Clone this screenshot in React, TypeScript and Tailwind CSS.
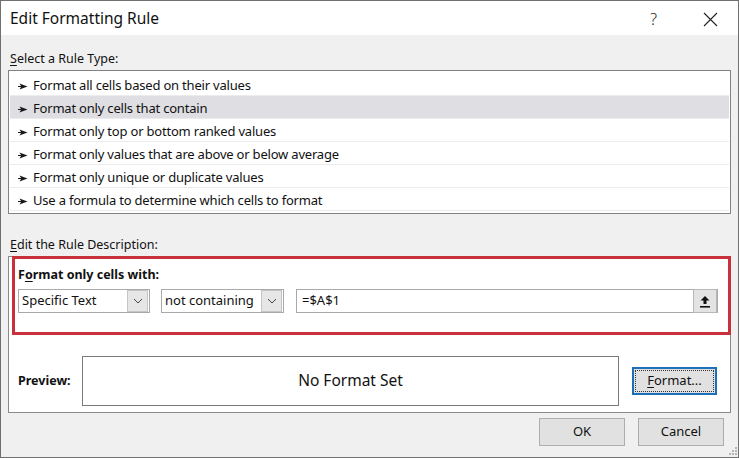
import React from 'react';

const font = { fontFamily: '"Segoe UI", "Noto Sans", "Open Sans", sans-serif' };

const rules = [
  'Format all cells based on their values',
  'Format only cells that contain',
  'Format only top or bottom ranked values',
  'Format only values that are above or below average',
  'Format only unique or duplicate values',
  'Use a formula to determine which cells to format',
];

function Chevron() {
  return (
    <svg width="10" height="6" viewBox="0 0 10 6">
      <polyline points="1,1 5,5 9,1" fill="none" stroke="#444" strokeWidth="1" />
    </svg>
  );
}

function Pointer() {
  return (
    <svg width="10" height="7" viewBox="0 0 10 7">
      <path d="M0 3 H3 L1.5 0.5 L9.5 3.5 L1.5 6.5 L3 4 H0 Z" fill="#1a1a1a" />
    </svg>
  );
}

function Select({ label, width }: { label: string; width: string }) {
  return (
    <div className={`flex h-[24px] items-center justify-between border border-[#a9a9a9] bg-white pl-[3px] pr-px ${width}`}>
      <span className="text-[13px] text-[#111]">{label}</span>
      <div className="flex h-[22px] w-[21px] items-center justify-center border border-[#c4c4c4] bg-[#e6e6e6]">
        <Chevron />
      </div>
    </div>
  );
}

function Button({ children }: { children: React.ReactNode }) {
  return (
    <div className="flex h-[28px] w-[86px] items-center justify-center border border-[#adadad] bg-[#e1e1e1] text-[13px] text-[#111]">
      {children}
    </div>
  );
}

export default function App() {
  return (
    <div style={font} className="flex h-[458px] w-[739px] flex-col border border-[#707070] bg-[#f0f0f0] text-[#111]">
      <div className="flex h-[37px] items-center justify-between bg-white pl-[9px] pr-[20px] pt-[2px]">
        <span className="text-[15.5px] text-[#111]">Edit Formatting Rule</span>
        <div className="flex items-center gap-[46px]">
          <span className="text-[16px] font-light text-[#222]">?</span>
          <svg width="15" height="15" viewBox="0 0 15 15">
            <path d="M1 1 L14 14 M14 1 L1 14" stroke="#222" strokeWidth="1.1" />
          </svg>
        </div>
      </div>

      <div className="flex flex-col px-[7px]">
        <div className="mt-[16px] h-[16px] pl-[2px] text-[12.5px] leading-[16px]">
          <span className="underline underline-offset-2">S</span>elect a Rule Type:
        </div>
        <div className="mt-[3px] flex h-[144px] flex-col border border-[#828282] bg-white px-px pt-[2px]">
          {rules.map((r, i) => (
            <div
              key={r}
              className={`flex h-[23px] shrink-0 items-center gap-[5px] border-b border-[#ececec] pl-[8px] pt-[4px] text-[13px] ${i === 1 ? 'bg-[#dfdfe3]' : ''}`}
            >
              <Pointer />
              <span className="tracking-[-0.2px]">{r}</span>
            </div>
          ))}
        </div>

        <div className="mt-[23px] h-[16px] pl-[2px] text-[12.5px] leading-[16px]">
          <span className="underline underline-offset-2">E</span>dit the Rule Description:
        </div>
        <div className="mt-[3px] flex h-[157px] flex-col border border-[#8a8a8a] bg-white">
          <div className="-mr-px -mt-px ml-[3px] flex h-[79px] flex-col border-[3px] border-[#c8303a] pl-[3px] pt-[8px]">
            <div className="h-[16px] text-[12.5px] font-bold leading-[16px]">
              F<span className="underline underline-offset-2">o</span>rmat only cells with:
            </div>
            <div className="mt-[6px] flex items-center">
              <Select label="Specific Text" width="w-[132px]" />
              <div className="w-[11px]" />
              <Select label="not containing" width="w-[123px]" />
              <div className="w-[12px]" />
              <div className="flex h-[24px] w-[422px] items-center justify-between border border-[#a9a9a9] bg-white pl-[5px]">
                <span className="text-[13px]">=$A$1</span>
                <div className="flex h-[24px] w-[24px] items-center justify-center border border-[#b8b8b8] bg-[#e3e3e3]">
                  <svg width="12" height="13" viewBox="0 0 12 13">
                    <path d="M6 1 L10.5 5.5 L7.5 5.5 L7.5 9 L4.5 9 L4.5 5.5 L1.5 5.5 Z" fill="#111" />
                    <rect x="1" y="11" width="10" height="1.6" fill="#111" />
                  </svg>
                </div>
              </div>
            </div>
          </div>
          <div className="mt-[21px] flex items-center pl-[9px]">
            <span className="w-[64px] text-[12.5px] font-bold">Preview:</span>
            <div className="flex h-[50px] w-[537px] items-center justify-center border border-[#7a7a7a] bg-white text-[15.5px]">
              No Format Set
            </div>
            <div className="ml-[13px] flex h-[28px] w-[85px] items-center justify-center border-2 border-[#1c6fb8] bg-[#e1e1e1] p-px">
              <div className="flex h-full w-full items-center justify-center border border-dotted border-[#333] text-[13px]">
                <span className="underline underline-offset-2">F</span>ormat...
              </div>
            </div>
          </div>
        </div>

        <div className="mt-[5px] flex items-center justify-end gap-[13px] pr-[7px]">
          <Button>OK</Button>
          <Button>Cancel</Button>
        </div>
      </div>
      <div className="flex flex-1 items-end justify-end pb-px pr-px">
        <svg width="10" height="10" viewBox="0 0 10 10">
          {[
            [8, 0], [8, 3], [5, 3], [8, 6], [5, 6], [2, 6],
          ].map(([x, y], i) => (
            <rect key={i} x={x} y={y + 1} width="2" height="2" fill="#b5b5b5" />
          ))}
        </svg>
      </div>
    </div>
  );
}
